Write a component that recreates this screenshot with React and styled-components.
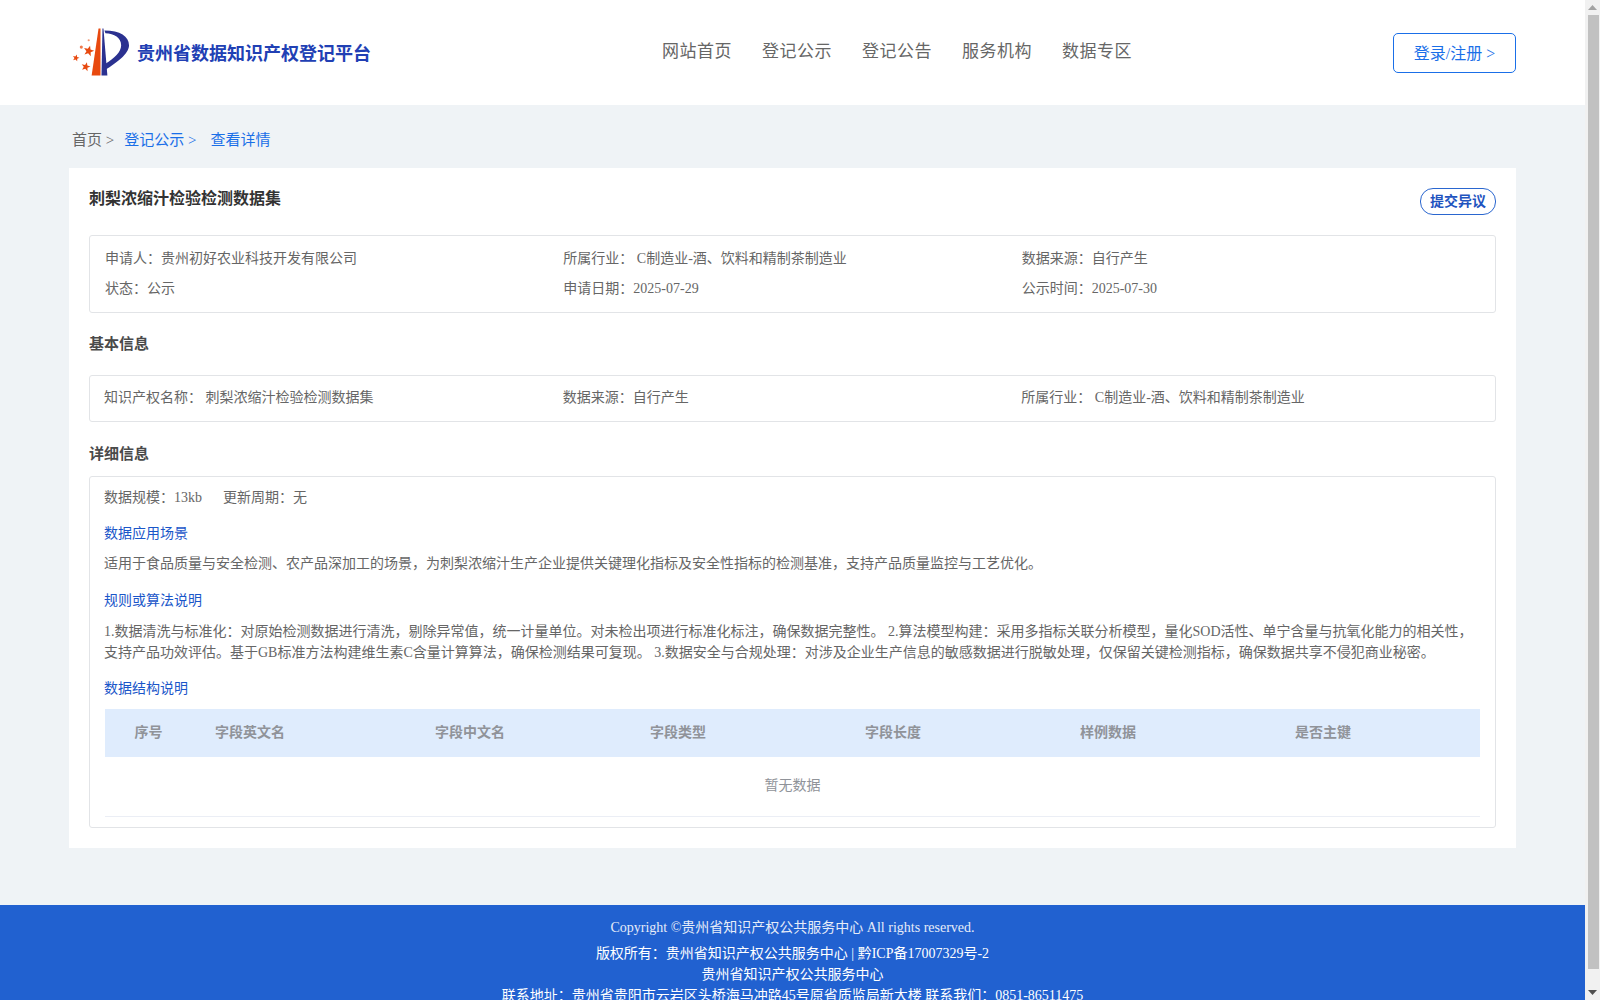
import styled, {createGlobalStyle} from "styled-components";

const GlobalStyle = createGlobalStyle`
    html, body {
        margin: 0;
        padding: 0;
        height: 100%;
        overflow: hidden;
    }
    body {
        font-family: "Liberation Serif", "Noto Sans CJK SC", serif;
        font-size: 14px;
        color: #666;
        background: #f1f1f1;
    }
    * {
        box-sizing: border-box;
    }
`;

const Shell = styled.div`
    display: flex;
    height: 100vh;
    overflow: hidden;
`;

const Page = styled.div`
    flex: 1;
    min-width: 0;
    background: #eff3f6;
`;

const ScrollTrack = styled.div`
    width: 15px;
    flex-shrink: 0;
    display: flex;
    flex-direction: column;
    align-items: center;
    background: #f1f1f1;

    & > .arrow {
        height: 15px;
        display: flex;
        align-items: center;
        justify-content: center;
    }
    & > .thumb {
        width: 11px;
        margin-left: 1px;
        height: 954px;
        background: #c1c1c1;
    }
    & > .rest {
        flex: 1;
    }
`;

const Header = styled.header`
    height: 105px;
    background: #fff;
    display: flex;
    align-items: center;
    padding: 0 69px 0 71px;
`;

const Brand = styled.div`
    width: 300px;
    display: flex;
    align-items: center;
    gap: 7px;

    & > .name {
        font-size: 18px;
        line-height: 26px;
        margin-top: 2px;
        font-weight: bold;
        color: #2140b4;
        white-space: nowrap;
    }
`;

const Nav = styled.nav`
    margin-left: 291px;
    margin-bottom: 2px;
    display: flex;
    gap: 30px;
`;

const NavItem = styled.a`
    font-size: 17px;
    letter-spacing: 0.5px;
    line-height: 24px;
    color: #666;
    white-space: nowrap;
`;

const LoginButton = styled.button`
    margin-left: auto;
    width: 123px;
    height: 40px;
    padding: 0 0 2px;
    border: 1px solid #1a6fe8;
    border-radius: 5px;
    background: #fff;
    color: #1a6fe8;
    font-family: inherit;
    font-size: 16px;
`;

const Crumbs = styled.div`
    height: 63px;
    padding: 24px 0 0 72px;
    font-size: 15px;
    line-height: 22px;
    display: flex;
`;

const Crumb = styled.span`
    color: ${props => props.$active ? "#1a6fe8" : "#666"};
    margin-right: ${props => props.$gap}px;
    white-space: pre;
`;

const Card = styled.main`
    width: 1447px;
    margin: 0 auto 57px;
    padding: 0 20px 20px;
    background: #fff;
`;

const TitleRow = styled.div`
    display: flex;
    justify-content: space-between;
    align-items: flex-start;
    padding-top: 20px;
    margin-bottom: 20px;
`;

const Title = styled.h1`
    margin: 0;
    font-size: 16px;
    line-height: 22px;
    font-weight: bold;
    color: #333;
`;

const ObjectButton = styled.button`
    width: 76px;
    height: 27px;
    padding: 0 0 3px;
    border: 1px solid #2a66cf;
    border-radius: 13px;
    background: #fff;
    color: #1f54bf;
    font-family: inherit;
    font-size: 14px;
    font-weight: bold;
`;

const InfoBox = styled.div`
    border: 1px solid #e2e4e7;
    border-radius: 3px;
    padding: ${props => props.$single ? "10px 15px 15px 14px" : "6px 15px 10px"};
    display: grid;
    grid-template-columns: repeat(3, 1fr);
    grid-auto-rows: ${props => props.$single ? "20px" : "30px"};
    align-items: center;
`;

const SectionHeading = styled.h2`
    margin: 0;
    padding: ${props => props.$top}px 0 ${props => props.$bottom}px;
    font-size: 15px;
    line-height: 22px;
    font-weight: bold;
    color: #4a4a4a;
`;

const DetailBox = styled.div`
    border: 1px solid #e2e4e7;
    border-radius: 3px;
    padding: 10px 15px 10px 14px;
`;

const Line = styled.div`
    line-height: 21px;
    display: flex;
    gap: 20px;

    & > span:first-child {
        padding-right: 1px;
    }
`;

const SubTitle = styled.div`
    margin-top: ${props => props.$top || 15}px;
    line-height: 21px;
    color: #1a56c9;
`;

const Para = styled.p`
    margin: ${props => props.$top || 10}px 0 0;
    line-height: 21px;
    color: #666;
`;

const TableHead = styled.div`
    margin: 10px 0 0 1px;
    height: 48px;
    padding-bottom: 4px;
    background: #dfecfd;
    display: grid;
    grid-template-columns: 85px 220px repeat(4, 215px) 1fr;
    align-items: center;
`;

const HeadCell = styled.div`
    font-weight: bold;
    color: #909399;
    padding-left: 25px;

    &:first-child {
        padding: 0 0 0 2px;
        text-align: center;
    }
`;

const EmptyRow = styled.div`
    margin-left: 1px;
    height: 60px;
    border-bottom: 1px solid #ebeef5;
    display: flex;
    align-items: center;
    justify-content: center;
    padding-bottom: 5px;
    color: #909399;
`;

const Footer = styled.footer`
    height: 120px;
    padding-top: 12px;
    background: #2161d0;
    color: #fff;
    text-align: center;
    line-height: 21px;

    & > .copyright {
        color: #e6ecf8;
        margin-bottom: 5px;
    }
`;

function star(cx, cy, r) {
    const points = [];
    for (let i = 0; i < 10; i++) {
        const rad = i % 2 === 0 ? r : r * 0.42;
        const angle = -Math.PI / 2 + 0.25 + (i * Math.PI) / 5;
        points.push(`${(cx + rad * Math.cos(angle)).toFixed(1)},${(cy + rad * Math.sin(angle)).toFixed(1)}`);
    }
    return points.join(" ");
}

function Logo() {
    return (
        <svg width="60" height="52" viewBox="0 0 60 52" fill="none">
            <polygon points="28,1 30,1 30,49 21,49" fill="#e8490f"/>
            <polygon points="32,1 33,1 37,49 31,49" fill="#2b3190"/>
            <path d="M34 3 C50 3 59 9 59 18 C59 27 46 36 35 43 L35 37 C44 31 51 25 51 18 C51 11 44 6 35 6 Z" fill="#2b3190"/>
            <polygon points={star(18, 24, 5.6)} fill="#e8490f"/>
            <polygon points={star(5, 31, 3.6)} fill="#e8490f"/>
            <polygon points={star(15, 40, 4.8)} fill="#e8490f"/>
            <circle cx="10.5" cy="20" r="1.6" fill="#ef7a4d"/>
            <circle cx="18" cy="13" r="1.1" fill="#f09a78"/>
        </svg>
    );
}

const navItems = ["网站首页", "登记公示", "登记公告", "服务机构", "数据专区"];
const tableColumns = ["序号", "字段英文名", "字段中文名", "字段类型", "字段长度", "样例数据", "是否主键"];

const summary = [
    "申请人：贵州初好农业科技开发有限公司",
    "所属行业： C制造业-酒、饮料和精制茶制造业",
    "数据来源：自行产生",
    "状态：公示",
    "申请日期：2025-07-29",
    "公示时间：2025-07-30",
];

const basicInfo = [
    "知识产权名称： 刺梨浓缩汁检验检测数据集",
    "数据来源：自行产生",
    "所属行业： C制造业-酒、饮料和精制茶制造业",
];

export default function App() {
    return (
        <Shell>
            <GlobalStyle/>
            <Page>
                <Header>
                    <Brand>
                        <Logo/>
                        <div className="name">贵州省数据知识产权登记平台</div>
                    </Brand>
                    <Nav>
                        {navItems.map(item => <NavItem key={item}>{item}</NavItem>)}
                    </Nav>
                    <LoginButton>登录/注册 &gt;</LoginButton>
                </Header>

                <Crumbs>
                    <Crumb $gap={10}>首页 &gt;</Crumb>
                    <Crumb $active $gap={14}>登记公示 &gt;</Crumb>
                    <Crumb $active>查看详情</Crumb>
                </Crumbs>

                <Card>
                    <TitleRow>
                        <Title>刺梨浓缩汁检验检测数据集</Title>
                        <ObjectButton>提交异议</ObjectButton>
                    </TitleRow>

                    <InfoBox>
                        {summary.map(text => <div key={text}>{text}</div>)}
                    </InfoBox>

                    <SectionHeading $top={20} $bottom={20}>基本信息</SectionHeading>
                    <InfoBox $single>
                        {basicInfo.map(text => <div key={text}>{text}</div>)}
                    </InfoBox>

                    <SectionHeading $top={21} $bottom={11}>详细信息</SectionHeading>
                    <DetailBox>
                        <Line>
                            <span>数据规模：13kb</span>
                            <span>更新周期：无</span>
                        </Line>
                        <SubTitle>数据应用场景</SubTitle>
                        <Para $top={9}>适用于食品质量与安全检测、农产品深加工的场景，为刺梨浓缩汁生产企业提供关键理化指标及安全性指标的检测基准，支持产品质量监控与工艺优化。</Para>
                        <SubTitle $top={16}>规则或算法说明</SubTitle>
                        <Para>1.数据清洗与标准化：对原始检测数据进行清洗，剔除异常值，统一计量单位。对未检出项进行标准化标注，确保数据完整性。 2.算法模型构建：采用多指标关联分析模型，量化SOD活性、单宁含量与抗氧化能力的相关性，支持产品功效评估。基于GB标准方法构建维生素C含量计算算法，确保检测结果可复现。 3.数据安全与合规处理：对涉及企业生产信息的敏感数据进行脱敏处理，仅保留关键检测指标，确保数据共享不侵犯商业秘密。</Para>
                        <SubTitle>数据结构说明</SubTitle>
                        <TableHead>
                            {tableColumns.map(col => <HeadCell key={col}>{col}</HeadCell>)}
                        </TableHead>
                        <EmptyRow>暂无数据</EmptyRow>
                    </DetailBox>
                </Card>

                <Footer>
                    <div className="copyright">Copyright ©贵州省知识产权公共服务中心 All rights reserved.</div>
                    <div>版权所有：贵州省知识产权公共服务中心 | 黔ICP备17007329号-2</div>
                    <div>贵州省知识产权公共服务中心</div>
                    <div>联系地址：贵州省贵阳市云岩区头桥海马冲路45号原省质监局新大楼 联系我们：0851-86511475</div>
                </Footer>
            </Page>

            <ScrollTrack>
                <div className="arrow">
                    <svg width="9" height="5" viewBox="0 0 9 5"><polygon points="4.5,0 9,5 0,5" fill="#a3a3a3"/></svg>
                </div>
                <div className="thumb"/>
                <div className="rest"/>
                <div className="arrow">
                    <svg width="9" height="5" viewBox="0 0 9 5"><polygon points="0,0 9,0 4.5,5" fill="#505050"/></svg>
                </div>
            </ScrollTrack>
        </Shell>
    );
}
